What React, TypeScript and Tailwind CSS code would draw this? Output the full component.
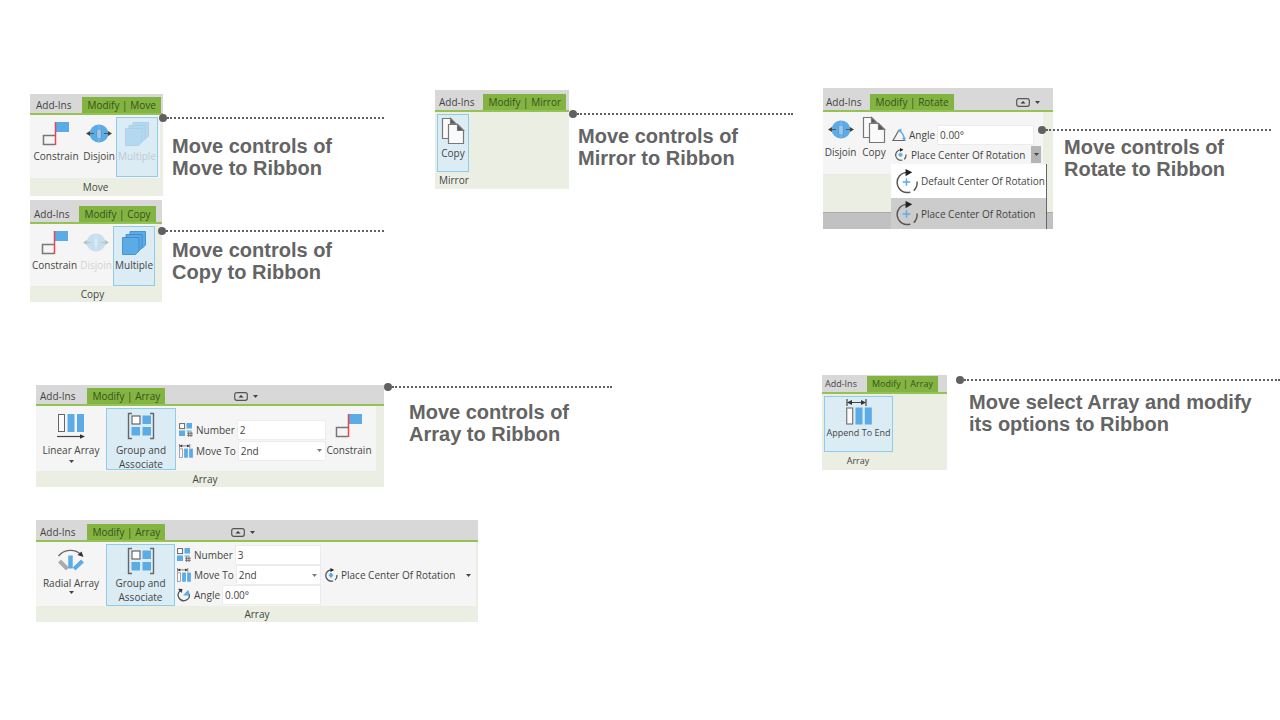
import type { ReactNode } from "react";

const BLUE = "#5aabe6";

function ConstrainIcon() {
  return (
    <svg width="28" height="26" viewBox="0 0 28 26" fill="none">
      <rect x="14" y="1" width="13" height="10" fill={BLUE} />
      <path d="M13 14.5H1.5v9H13" stroke="#777" strokeWidth="1.5" />
      <path d="M13.5 1v23" stroke="#e8474f" strokeWidth="1.5" />
    </svg>
  );
}

function DisjoinIcon() {
  return (
    <svg width="26" height="26" viewBox="0 0 26 26" fill="none">
      <path d="M12.600 3.500a9 9 0 0 0 0 18v-4.500h-2v-8h2z" fill={BLUE} />
      <path d="M13.400 3.500a9 9 0 0 1 0 18v-4.500h2v-8h-2z" fill={BLUE} />
      <path d="M11 9h4v8h-4z" fill={BLUE} opacity=".6" />
      <path d="M13 3.500v5.500M13 17v4.500M10.600 9v8M15.400 9v8" stroke="#3c83bd" strokeWidth=".7" />
      <path d="M2 12.500h6M18 12.500h6" stroke="#4b5660" strokeWidth="1" />
      <path d="M0 12.500l4-2.500v5zM26 12.500l-4-2.500v5z" fill="#444" />
    </svg>
  );
}

function MultipleIcon() {
  return (
    <svg width="26" height="26" viewBox="0 0 26 26" fill={BLUE} stroke="#3b87c4" strokeWidth=".8">
      <path d="M9 1.500h15.500V15L21 18.500H9z" />
      <path d="M5 4.500h16V18L17 21.500H5z" />
      <path d="M1.500 7.500H18V21l-3.500 3.500h-13z" />
    </svg>
  );
}

function CopyIcon() {
  return (
    <svg width="24" height="28" viewBox="0 0 24 28" fill="#fafafa" stroke="#777" strokeWidth="1.200">
      <path d="M1.500 1.500h8l5 5v15h-13z" />
      <path d="M9.500 1.500v5h5z" fill="#555" />
      <path d="M7.500 7.500h9l6 6v13h-15z" />
      <path d="M16.500 7.500v6h6z" fill="#555" />
    </svg>
  );
}

function LinearArrayIcon() {
  return (
    <svg width="28" height="26" viewBox="0 0 28 26" fill="none">
      <rect x="1.500" y="1.500" width="6" height="17" fill="#fafafa" stroke="#666" />
      <rect x="10.500" y="1" width="7" height="18" fill={BLUE} />
      <rect x="20" y="1" width="7" height="18" fill={BLUE} />
      <path d="M0 23.500h24" stroke="#444" strokeWidth="1.200" />
      <path d="M28 23.500l-5-2.200v4.400z" fill="#333" />
    </svg>
  );
}

function RadialArrayIcon() {
  return (
    <svg width="28" height="26" viewBox="0 0 28 26" fill="none">
      <path d="M1.500 8C7 1 18 .500 24 6.500" stroke="#666" strokeWidth="1.400" />
      <path d="M26.500 9l-6-2 4-3.500z" fill="#333" />
      <path d="M2.500 13l8 8" stroke="#aaa" strokeWidth="4" />
      <path d="M13.500 7.500v13" stroke={BLUE} strokeWidth="4.500" />
      <path d="M25.500 13l-8.500 8" stroke={BLUE} strokeWidth="4" />
    </svg>
  );
}

function GroupIcon() {
  return (
    <svg width="28" height="28" viewBox="0 0 28 28" fill="none">
      <path d="M5 1.500H1.500v25H5M23 1.500h3.500v25H23" stroke="#666" strokeWidth="1.400" />
      <rect x="5" y="4" width="8" height="8" fill="#fff" stroke="#666" strokeWidth="1.200" />
      <rect x="15.500" y="3.500" width="8.500" height="8.500" fill={BLUE} />
      <rect x="4.500" y="15" width="8.500" height="8.500" fill={BLUE} />
      <rect x="15.500" y="15" width="8.500" height="8.500" fill={BLUE} />
    </svg>
  );
}

function AppendIcon({ size }: { size: number }) {
  return (
    <svg width={size} height={size} viewBox="0 0 26 26" fill="none" className="shrink-0">
      <path d="M1 0v7M20 0v7M2 3.500h17" stroke="#444" strokeWidth="1.200" />
      <path d="M1 3.500l5-2.500v5zM20 3.500L15 1v5z" fill="#333" />
      <rect x=".700" y="9" width="6" height="16" fill="#fafafa" stroke="#777" strokeWidth="1.200" />
      <rect x="9.500" y="8.500" width="7" height="17" fill={BLUE} />
      <rect x="18.800" y="8.500" width="7" height="17" fill={BLUE} />
    </svg>
  );
}

function NumberIcon() {
  return (
    <svg width="14" height="14" viewBox="0 0 14 14" fill="none" className="shrink-0">
      <rect x=".6" y=".6" width="5" height="5" fill="#fff" stroke="#666" />
      <rect x="7.500" y="0" width="5.500" height="5.500" fill={BLUE} />
      <rect x="0" y="7.500" width="6" height="5.500" fill={BLUE} />
      <path d="M7.500 7.500h5v1h-5z" fill={BLUE} />
      <path d="M9.700 8.500v5.500M12 8.500v5.500M8 10.200h5.800M8 12.300h5.800" stroke="#555" strokeWidth=".8" />
    </svg>
  );
}

function AngleIcon() {
  return (
    <svg width="14" height="14" viewBox="0 0 14 14" fill="none" className="shrink-0">
      <path d="M7 2L1 12.500h12.500" stroke="#666" strokeWidth="1.200" />
      <path d="M7.500 2.500q4.500 3.500 4.500 8.500" stroke={BLUE} strokeWidth="1.500" />
      <path d="M5.500 2.200l4-1.700-.3 4.200zM10 10l4-.5-1.500 3.500z" fill={BLUE} />
    </svg>
  );
}

function AngleArcIcon() {
  return (
    <svg width="14" height="14" viewBox="0 0 14 14" fill="none" className="shrink-0">
      <path d="M3.500 2.500a5.600 5.600 0 1 0 8.800 3.500" stroke="#555" strokeWidth="1.300" />
      <path d="M1 .800l4.500.200-1 4z" fill="#333" />
      <path d="M6 7.500l5-5.500q2 2 1.500 5.500z" fill={BLUE} />
    </svg>
  );
}

function RotationIcon({ size, thin = false }: { size: number; thin?: boolean }) {
  return (
    <svg width={size} height={size} viewBox="0 0 26 26" fill="none" className="shrink-0">
      <path d="M14 3.500A10.500 10.500 0 1 0 17 24M20.500 22.500q4-3.500 3.500-9.500" stroke="#555" strokeWidth={thin ? 1.5 : 2.4} />
      <path d="M12 0l7 3.500-7 4z" fill="#222" />
      <path d="M13 9.500v8M9 13.500h8" stroke={BLUE} strokeWidth={thin ? 1.5 : 4} />
    </svg>
  );
}

function Caret({ className = "" }: { className?: string }) {
  return (
    <svg width="5" height="3" viewBox="0 0 5 3" fill="#444" className={`shrink-0 ${className}`}>
      <path d="M0 0h5L2.500 3z" />
    </svg>
  );
}

function PanelToggle({ className }: { className: string }) {
  return (
    <button aria-label="Ribbon display" className={`flex h-4 items-center gap-[5px] ${className}`}>
      <svg width="14" height="9" viewBox="0 0 14 9" fill="none">
        <rect x=".7" y=".7" width="12.600" height="7.600" rx="2" stroke="#555" strokeWidth="1.200" />
        <path d="M4.500 5.500L7 3l2.500 2.500z" fill="#333" />
      </svg>
      <Caret />
    </button>
  );
}

type RibbonProps = {
  tab: string;
  className: string;
  header: string;
  toggle?: ReactNode;
  children: ReactNode;
};

function Ribbon({ tab, className, header, toggle, children }: RibbonProps) {
  return (
    <section className={`relative shrink-0 bg-[#ebefe3] ${className}`}>
      <header className={`flex items-end border-b-2 border-[#94c353] bg-[#d8d8d8] whitespace-nowrap ${header}`}>
        <button className="h-4">Add-Ins</button>
        <button className="h-4 bg-[#83b441] px-[5px] text-[#38521c]">{tab}</button>
        {toggle}
      </header>
      {children}
    </section>
  );
}

type ToolProps = {
  icon: ReactNode;
  label: ReactNode;
  className?: string;
  spacing?: string;
  active?: boolean;
  disabled?: boolean;
  caret?: boolean;
};

function Tool({ icon, label, className = "", spacing = "gap-px pt-[2px]", active, disabled, caret }: ToolProps) {
  return (
    <button
      disabled={disabled}
      className={`flex shrink-0 flex-col items-center border text-center leading-[14px] ${spacing} ${
        active ? "border-[#90cbe9] bg-[#dcecf5]" : "border-transparent"
      } ${className}`}
    >
      <span className={`flex h-7 items-center ${disabled ? "opacity-30" : ""}`}>{icon}</span>
      <span className={`whitespace-nowrap ${disabled ? "opacity-20" : ""}`}>{label}</span>
      {caret && <Caret />}
    </button>
  );
}

function TextField({ icon, label, value }: { icon: ReactNode; label: string; value: string }) {
  return (
    <label className="flex items-center gap-[3px]">
      {icon}
      <span className="whitespace-nowrap">{label}</span>
      <input defaultValue={value} className="h-[18px] min-w-0 flex-1 bg-white px-[2px] outline outline-[#ececec]" />
    </label>
  );
}

function MoveToField() {
  return (
    <label className="relative flex items-center gap-[3px]">
      <AppendIcon size={14} />
      <span className="whitespace-nowrap">Move To</span>
      <select className="h-[18px] min-w-0 flex-1 appearance-none bg-white px-[2px] outline outline-[#ececec]">
        <option>2nd</option>
        <option>Last</option>
      </select>
      <Caret className="pointer-events-none absolute right-[3px] opacity-70" />
    </label>
  );
}

type CalloutProps = {
  className?: string;
  text?: string;
  children: ReactNode;
};

function Callout({ className = "", text = "pt-2 pl-[13px]", children }: CalloutProps) {
  return (
    <div className={`z-10 min-w-0 flex-1 ${className}`}>
      <div className="flex items-center">
        <span className="size-2 rounded-full bg-[#606060]" />
        <span className="flex-1 border-t-2 border-dotted border-[#606060]" />
      </div>
      <h2
        className={`font-[Liberation_Sans,sans-serif] text-xl leading-[22px] font-bold whitespace-nowrap text-[#646464] ${text}`}
      >
        {children}
      </h2>
    </div>
  );
}

function MoveTools() {
  return (
    <>
      <div className="mr-[3px] flex bg-[#f5f5f5] pt-[2px] pb-[1px]">
        <Tool icon={<ConstrainIcon />} label="Constrain" className="w-[52px]" />
        <Tool icon={<DisjoinIcon />} label="Disjoin" className="w-[34px]" />
        <Tool icon={<MultipleIcon />} label="Multiple" className="h-[60px] w-[42px]" active disabled />
      </div>
      <p className="pr-[2px] text-center leading-[18px]">Move</p>
    </>
  );
}

function CopyTools() {
  return (
    <>
      <div className="mr-[7px] flex bg-[#f5f5f5] pt-[2px]">
        <Tool icon={<ConstrainIcon />} label="Constrain" className="w-[49px]" />
        <Tool icon={<DisjoinIcon />} label="Disjoin" className="w-[34px]" disabled />
        <Tool icon={<MultipleIcon />} label="Multiple" className="h-[60px] w-[42px]" active />
      </div>
      <p className="pr-[7px] text-center">Copy</p>
    </>
  );
}

function GroupTool({ className, spacing }: { className: string; spacing?: string }) {
  return (
    <Tool
      icon={<GroupIcon />}
      label={
        <>
          Group and
          <br />
          Associate
        </>
      }
      className={className}
      spacing={spacing}
      active
    />
  );
}

export default function App() {
  return (
    <main className="grid min-h-screen grid-cols-[405fr_388fr_457fr] content-start bg-white pt-[88px] pl-[30px] font-[Open_Sans,sans-serif] text-[10px] leading-4 text-[#444]">
      <div className="flex flex-col gap-1 pt-[6px] pr-[51px]">
        <div className="flex items-start">
          <Ribbon tab="Modify | Move" className="w-[133px]" header="h-[21px] gap-[11px] pl-[6px]">
            <MoveTools />
          </Ribbon>
          <Callout className="-ml-1 pt-5" text="pt-[13px] pl-[13px]">
            Move controls of
            <br />
            Move to Ribbon
          </Callout>
        </div>
        <div className="flex items-start">
          <Ribbon tab="Modify | Copy" className="w-[132px]" header="h-[24px] gap-[10px] pl-[4px]">
            <CopyTools />
          </Ribbon>
          <Callout className="-ml-1 pt-[27px]" text="pt-1 pl-[14px]">
            Move controls of
            <br />
            Copy to Ribbon
          </Callout>
        </div>
      </div>

      <div className="flex items-start pt-[2px] pr-[30px]">
        <Ribbon tab="Modify | Mirror" className="w-[134px]" header="h-[22px] gap-[9px] pl-[4px]">
          <div className="pt-[2px] pl-[2px]">
            <Tool icon={<CopyIcon />} label="Copy" className="h-[58px] w-[32px]" active />
          </div>
          <p className="pl-1 leading-[17px]">Mirror</p>
        </Ribbon>
        <Callout className="pt-5" text="pt-[7px] pl-[9px]">
          Move controls of
          <br />
          Mirror to Ribbon
        </Callout>
      </div>

      <div className="flex items-start pr-[9px]">
        <Ribbon
          tab="Modify | Rotate"
          className="w-[230px]"
          header="h-[24px] gap-[9px] pl-[3px]"
          toggle={<PanelToggle className="mr-[13px] ml-auto" />}
        >
          <div className="mr-[10px] flex h-[62px] bg-[#f5f5f5] pt-[1px]">
            <Tool icon={<DisjoinIcon />} label="Disjoin" className="w-[35px]" />
            <Tool icon={<CopyIcon />} label="Copy" className="w-[32px]" />
            <div className="flex min-w-0 flex-1 flex-col gap-[2px] pt-[13px] pl-[2px]">
              <div className="pr-[10px]">
                <TextField icon={<AngleIcon />} label="Angle" value="0.00°" />
              </div>
              <button className="flex h-[17px] items-center gap-1 pl-[2px] whitespace-nowrap">
                <RotationIcon size={13} />
                Place Center Of Rotation
                <span className="mr-[2px] ml-auto flex h-[17px] w-[10px] items-center justify-center bg-[#b5b5b5]">
                  <Caret />
                </span>
              </button>
            </div>
          </div>
          <div className="h-[38px]" />
          <div className="h-[17px] border-t border-[#aaa] bg-[#c1c1c1]" />
          <ul className="absolute right-[6px] bottom-0 w-[156px] border-r border-[#666] bg-white">
            <li>
              <button className="flex h-[34px] w-full items-center gap-[2px] pl-[3px] whitespace-nowrap">
                <RotationIcon size={25} thin />
                Default Center Of Rotation
              </button>
            </li>
            <li>
              <button className="flex h-[31px] w-full items-center gap-[2px] bg-[#cccccc] pl-[3px] whitespace-nowrap">
                <RotationIcon size={25} thin />
                Place Center Of Rotation
              </button>
            </li>
          </ul>
        </Ribbon>
        <Callout className="-ml-[15px] pt-[38px]" text="pt-[2px] pl-[26px]">
          Move controls of
          <br />
          Rotate to Ribbon
        </Callout>
      </div>

      <div className="col-span-2 mt-[73px] flex flex-col gap-[33px] pt-[10px] pr-[211px] pl-[6px]">
        <div className="flex items-start">
          <Ribbon
            tab="Modify | Array"
            className="w-[348px]"
            header="h-[21px] gap-[12px] pl-[4px]"
            toggle={<PanelToggle className="ml-[57px]" />}
          >
            <div className="mr-2 flex bg-[#f5f5f5] pt-[2px] pb-[1px]">
              <Tool
                icon={<LinearArrayIcon />}
                label="Linear Array"
                className="w-[70px]"
                spacing="gap-[3px] pt-[3px]"
                caret
              />
              <GroupTool className="h-[62px] w-[70px]" spacing="gap-[3px] pt-[3px]" />
              <div className="flex w-[149px] flex-col justify-center gap-[3px] pt-[2px] pl-[3px]">
                <TextField icon={<NumberIcon />} label="Number" value="2" />
                <MoveToField />
              </div>
              <Tool
                icon={<ConstrainIcon />}
                label="Constrain"
                className="w-[48px]"
                spacing="gap-[3px] pt-[3px]"
              />
            </div>
            <p className="pr-[10px] text-center">Array</p>
          </Ribbon>
          <Callout className="-mt-[2px]" text="pt-[10px] pl-[25px]">
            Move controls of
            <br />
            Array to Ribbon
          </Callout>
        </div>

        <Ribbon
          tab="Modify | Array"
          className="w-[442px]"
          header="h-[22px] gap-[12px] pl-[4px]"
          toggle={<PanelToggle className="ml-[54px]" />}
        >
          <div className="mr-[2px] flex bg-[#f5f5f5] pt-[2px]">
            <Tool icon={<RadialArrayIcon />} label="Radial Array" className="w-[70px]" caret />
            <GroupTool className="h-[62px] w-[69px]" />
            <div className="flex w-[145px] flex-col justify-center gap-[2px] pl-[2px]">
              <TextField icon={<NumberIcon />} label="Number" value="3" />
              <MoveToField />
              <TextField icon={<AngleArcIcon />} label="Angle" value="0.00°" />
            </div>
            <button className="flex flex-1 items-center gap-[3px] pr-[5px] pl-1 whitespace-nowrap">
              <RotationIcon size={14} />
              Place Center Of Rotation
              <Caret className="ml-auto" />
            </button>
          </div>
          <p className="text-center">Array</p>
        </Ribbon>
      </div>

      <div className="mt-[73px] -ml-px flex items-start">
        <Ribbon tab="Modify | Array" className="w-[125px] text-[9px]" header="h-[19px] gap-[10px] pl-[3px]">
          <div className="pt-[2px] pl-[2px]">
            <Tool
              icon={<AppendIcon size={26} />}
              label="Append To End"
              className="h-[56px] w-[69px]"
              spacing="pt-px"
              active
            />
          </div>
          <p className="w-[72px] text-center leading-[18px]">Array</p>
        </Ribbon>
        <Callout className="ml-[9px] pt-px" text="pt-[7px] pl-[13px]">
          Move select Array and modify
          <br />
          its options to Ribbon
        </Callout>
      </div>
    </main>
  );
}
